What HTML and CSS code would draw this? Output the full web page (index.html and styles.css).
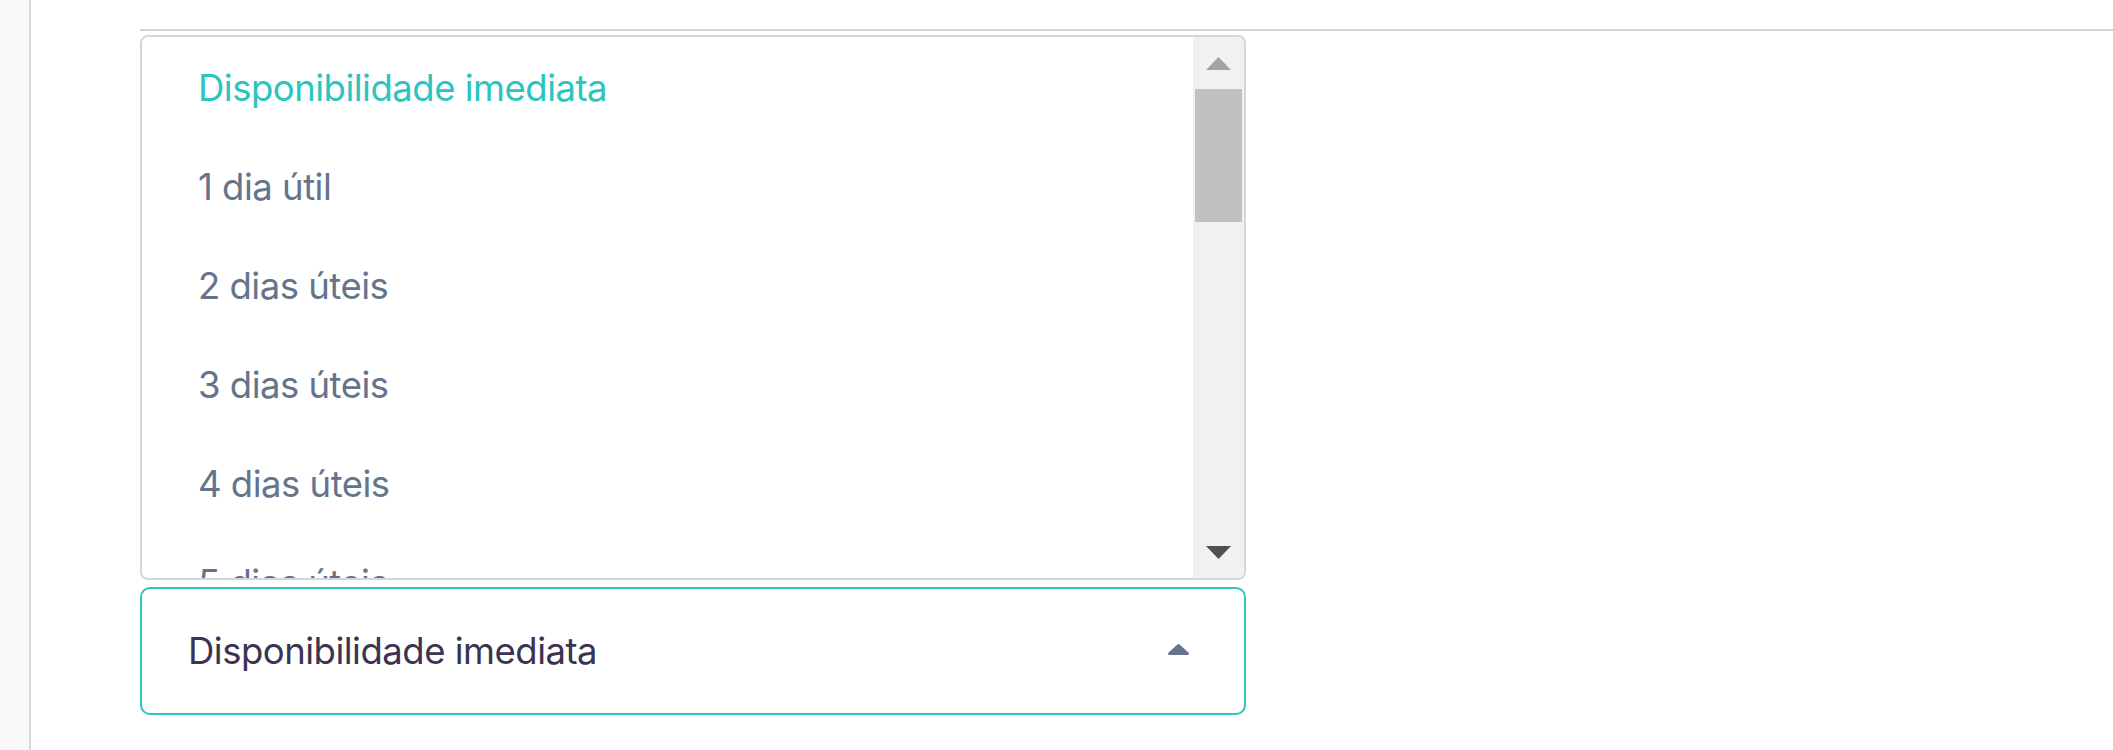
FILE: index.html
```html
<!DOCTYPE html>
<html lang="pt">
<head>
<meta charset="utf-8">
<title>Disponibilidade</title>
<link rel="stylesheet" href="styles.css">
</head>
<body>
<div class="page">
  <aside class="sidebar"></aside>
  <main class="main">
    <div class="rule"></div>
    <div class="field">
      <div class="listbox">
        <ul class="options">
          <li class="option selected">Disponibilidade imediata</li>
          <li class="option">1 dia útil</li>
          <li class="option">2 dias úteis</li>
          <li class="option">3 dias úteis</li>
          <li class="option">4 dias úteis</li>
          <li class="option">5 dias úteis</li>
        </ul>
        <div class="scrollbar">
          <div class="sb-btn">
            <svg width="25" height="13" viewBox="0 0 25 13"><polygon points="12.5,0 25,13 0,13" fill="#a3a3a3"/></svg>
          </div>
          <div class="sb-thumb"></div>
          <div class="sb-track"></div>
          <div class="sb-btn">
            <svg width="25" height="13" viewBox="0 0 25 13"><polygon points="0,0 25,0 12.5,13" fill="#505050"/></svg>
          </div>
        </div>
      </div>
      <div class="select">
        <span class="select-value">Disponibilidade imediata</span>
        <svg class="caret" width="21" height="11" viewBox="0 0 21 11"><polygon points="10.5,1.6 19.4,9.5 1.6,9.5" fill="#64748b" stroke="#64748b" stroke-width="3" stroke-linejoin="round"/></svg>
      </div>
    </div>
  </main>
</div>
</body>
</html>
```

FILE: styles.css
```css
html, body {
  margin: 0;
  padding: 0;
  background: #ffffff;
}

body {
  font-family: Inter, "Noto Sans", sans-serif;
  height: 750px;
  overflow: hidden;
}

.page {
  display: flex;
  height: 750px;
}

.sidebar {
  flex: none;
  width: 29px;
  background: #f8f8f9;
  border-right: 2px solid #d5d9de;
}

.main {
  flex: 1;
  padding-top: 29px;
  padding-left: 109px;
}

.rule {
  height: 0;
  border-top: 2px solid #d1d5db;
}

.field {
  margin-top: 4px;
  width: 1106px;
}

.listbox {
  box-sizing: border-box;
  height: 545px;
  border: 2px solid #d3d7dc;
  border-radius: 8px;
  display: flex;
  overflow: hidden;
  background: #ffffff;
}

.options {
  flex: 1;
  margin: 0;
  padding: 2px 0 0 56px;
  list-style: none;
  overflow: hidden;
}

.option {
  flex: none;
  height: 99px;
  display: flex;
  align-items: center;
  font-size: 36.5px;
  letter-spacing: -0.5px;
  line-height: 1.21;
  color: #64748b;
}

.option.selected {
  color: #2cc4bf;
}

.scrollbar {
  flex: none;
  width: 51px;
  background: #f1f1f1;
  display: flex;
  flex-direction: column;
}

.sb-btn {
  height: 52px;
  display: flex;
  align-items: center;
  justify-content: center;
}

.sb-thumb {
  height: 133px;
  margin: 0 2px;
  background: #c1c1c1;
}

.sb-track {
  flex: 1;
}

.select {
  box-sizing: border-box;
  margin-top: 7px;
  height: 128px;
  border: 2px solid #2cc5c0;
  border-radius: 10px;
  display: flex;
  align-items: center;
  justify-content: space-between;
  padding: 0 55px 0 46px;
  font-size: 36.5px;
  letter-spacing: -0.5px;
  line-height: 1.21;
  color: #3c3353;
}

.caret {
  margin-bottom: 3px;
}
```
